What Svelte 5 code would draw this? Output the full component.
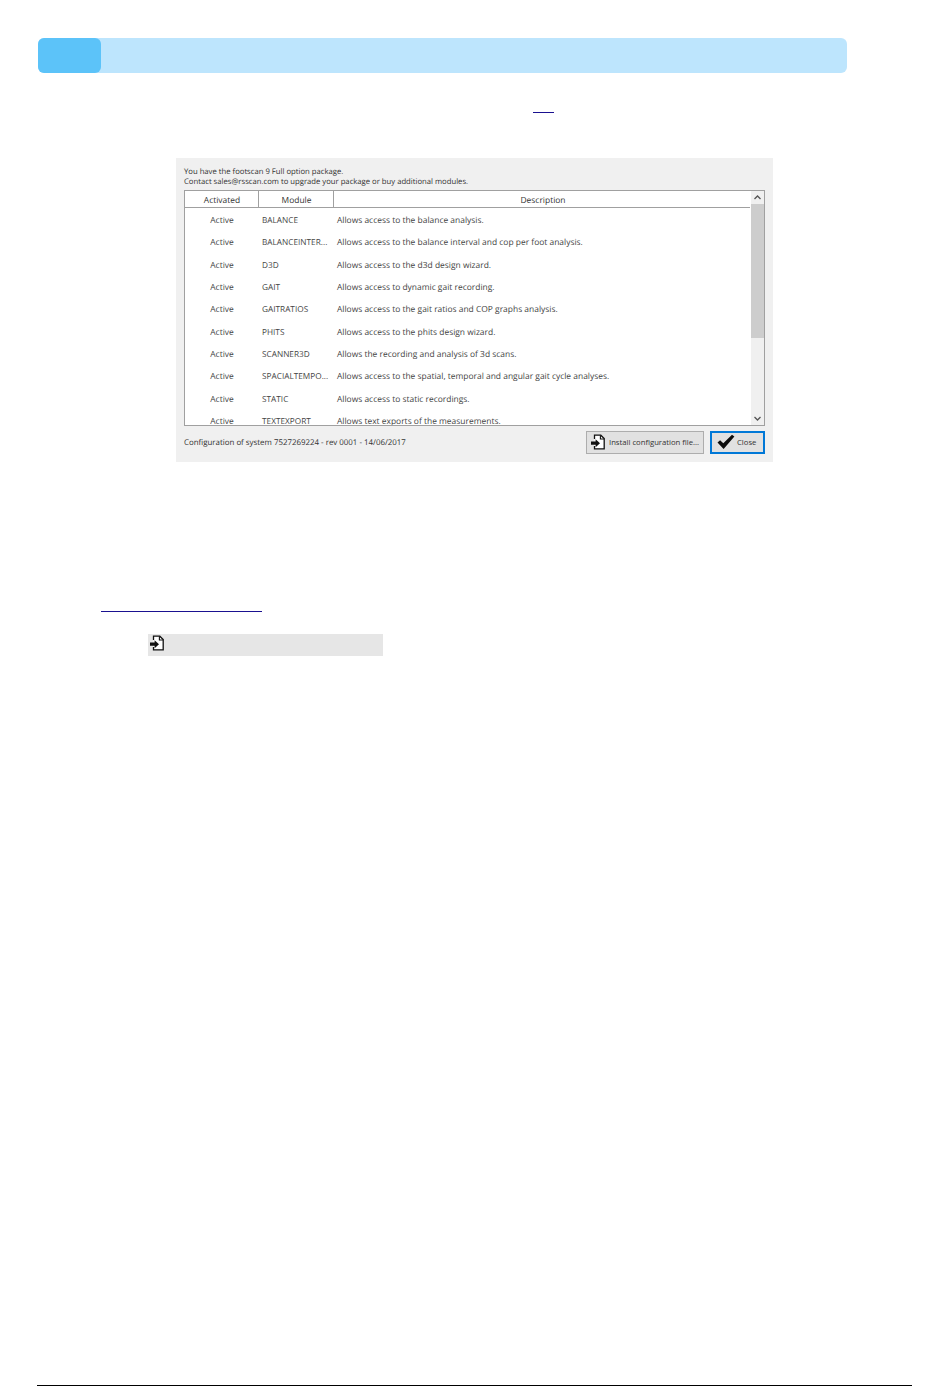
<script>
  const rows = [
    ['BALANCE', 'Allows access to the balance analysis.'],
    ['BALANCEINTER...', 'Allows access to the balance interval and cop per foot analysis.'],
    ['D3D', 'Allows access to the d3d design wizard.'],
    ['GAIT', 'Allows access to dynamic gait recording.'],
    ['GAITRATIOS', 'Allows access to the gait ratios and COP graphs analysis.'],
    ['PHITS', 'Allows access to the phits design wizard.'],
    ['SCANNER3D', 'Allows the recording and analysis of 3d scans.'],
    ['SPACIALTEMPO...', 'Allows access to the spatial, temporal and angular gait cycle analyses.'],
    ['STATIC', 'Allows access to static recordings.'],
    ['TEXTEXPORT', 'Allows text exports of the measurements.']
  ];
</script>

{#snippet importIcon(size)}
  <svg width={size} height={size} viewBox="0 0 16 16" class="icon">
    <path d="M4.5 5V1.2h6.3l3.4 3.4V14.8H4.5V12" fill="#fff" stroke="#111" stroke-width="1.3"/>
    <path d="M10.4 1.4V5h3.8" fill="none" stroke="#111" stroke-width="1.1"/>
    <path d="M1 7.6h4.6V5.2L10 9.2l-4.4 4v-2.4H1z" fill="#111"/>
  </svg>
{/snippet}

<div class="page">
  <header class="bar"><div class="bar-tab"></div></header>
  <div class="top-link-row"><span class="top-link"></span></div>

  <section class="window">
    <p class="intro">You have the footscan 9 Full option package.<br />Contact sales@rsscan.com to upgrade your package or buy additional modules.</p>
    <div class="table">
      <div class="main">
        <div class="thead">
          <div class="c1">Activated</div>
          <div class="c2">Module</div>
          <div class="c3">Description</div>
        </div>
        <div class="tbody">
          {#each rows as r}
            <div class="row">
              <div class="c1">Active</div>
              <div class="c2">{r[0]}</div>
              <div class="c3">{r[1]}</div>
            </div>
          {/each}
        </div>
      </div>
      <div class="scroll">
        <svg class="arrow" width="13" height="13" viewBox="0 0 13 13"><path d="M3.5 8L6.5 5l3 3" fill="none" stroke="#555" stroke-width="1.3"/></svg>
        <div class="track"><div class="thumb"></div></div>
        <svg class="arrow" width="13" height="13" viewBox="0 0 13 13"><path d="M3.5 5l3 3 3-3" fill="none" stroke="#555" stroke-width="1.3"/></svg>
      </div>
    </div>
    <div class="foot">
      <span class="config">Configuration of system 7527269224 - rev 0001 - 14/06/2017</span>
      <button class="btn install">{@render importIcon(16)}<span>Install configuration file...</span></button>
      <button class="btn close">
        <svg width="18" height="16" viewBox="0 0 18 16" class="icon"><path d="M0.5 8.5l2.6-2.2 3.2 3L15 0.8l2.4 1.8L6.6 15z" fill="#0c0c0c"/></svg>
        <span>Close</span>
      </button>
    </div>
  </section>

  <div class="bottom-link"></div>
  <div class="grey-row">{@render importIcon(16)}</div>
  <div class="spacer"></div>
  <footer class="rule"></footer>
</div>

<style>
  :global(body) { margin: 0; background: #fff; }
  .page {
    width: 950px; height: 1398px; box-sizing: border-box;
    padding-top: 38px; display: flex; flex-direction: column;
    font-family: "Open Sans", "Noto Sans", sans-serif; color: #3a3a3a;
  }
  .bar {
    margin-left: 38px; width: 809px; height: 35px; flex: none;
    background: #bde5fd; border-radius: 6px; display: flex;
  }
  .bar-tab { width: 63px; background: #5cc3f9; border-radius: 6px; }
  .top-link-row { height: 40px; flex: none; display: flex; align-items: flex-end; padding-left: 533px; box-sizing: border-box; }
  .top-link { width: 21px; height: 1px; background: #1a1190; }
  .window {
    margin: 45px 0 0 176px; width: 597px; height: 304px; flex: none; box-sizing: border-box;
    background: #f0f0f0; padding: 7px 8px 0 8px; display: flex; flex-direction: column;
    text-rendering: geometricPrecision;
  }
  .intro { margin: 0; font-size: 7.7px; line-height: 10px; height: 25px; color: #333; padding-top: 2px; box-sizing: border-box; white-space: nowrap; }
  .table {
    width: 581px; height: 236px; box-sizing: border-box; flex: none;
    border: 1px solid #a0a0a0; background: #fff; display: flex;
    font-size: 8.45px; color: #444;
  }
  .main { width: 565px; flex: none; overflow: hidden; }
  .thead {
    display: flex; height: 17px; box-sizing: border-box; border-bottom: 1px solid #a0a0a0;
    line-height: 19px; text-align: center; color: #333;
  }
  .thead .c1, .thead .c2 { border-right: 1px solid #a0a0a0; box-sizing: border-box; padding-left: 1px; }
  .c1 { width: 74px; flex: none; text-align: center; }
  .c2 { width: 75px; flex: none; }
  .c3 { flex: 1; }
  .thead .c3 { padding-left: 2px; }
  .tbody { padding-top: 2px; }
  .row { display: flex; height: 22.35px; line-height: 22.35px; white-space: nowrap; }
  .row .c2 { padding-left: 3px; box-sizing: border-box; font-size: 8.25px; }
  .row .c3 { padding-left: 3px; }
  .scroll {
    flex: 1; background: #f0f0f0; display: flex; flex-direction: column; align-items: center;
    margin-left: 1px;
  }
  .arrow { flex: none; }
  .track { flex: 1; width: 100%; }
  .thumb { height: 134px; background: #cdcdcd; }
  .foot { display: flex; align-items: flex-start; height: 28px; margin-top: 5px; }
  .config { font-size: 7.9px; line-height: 24px; color: #333; width: 402px; flex: none; }
  .btn {
    font: inherit; font-size: 7.7px; color: #333; display: flex; align-items: center; gap: 3px;
    background: #e1e1e1; border: 1px solid #adadad; height: 23px; padding: 0 0 2px 3px;
    margin: 0; box-sizing: border-box; white-space: nowrap;
  }
  .install { width: 118px; }
  .close { width: 55px; margin-left: 6px; border: 2px solid #0078d7; padding-left: 5px; gap: 2px; }
  .icon { flex: none; display: block; }
  .bottom-link { margin: 149px 0 0 101px; width: 161px; height: 1px; flex: none; background: #1a1190; }
  .grey-row {
    margin: 22px 0 0 148px; width: 235px; height: 22px; flex: none;
    background: #e6e6e6; display: flex; align-items: flex-start; padding: 1px 0 0 1px; box-sizing: border-box;
  }
  .spacer { height: 729px; flex: none; }
  .rule { margin-left: 37px; width: 875px; height: 1px; background: #000; flex: none; }
</style>
